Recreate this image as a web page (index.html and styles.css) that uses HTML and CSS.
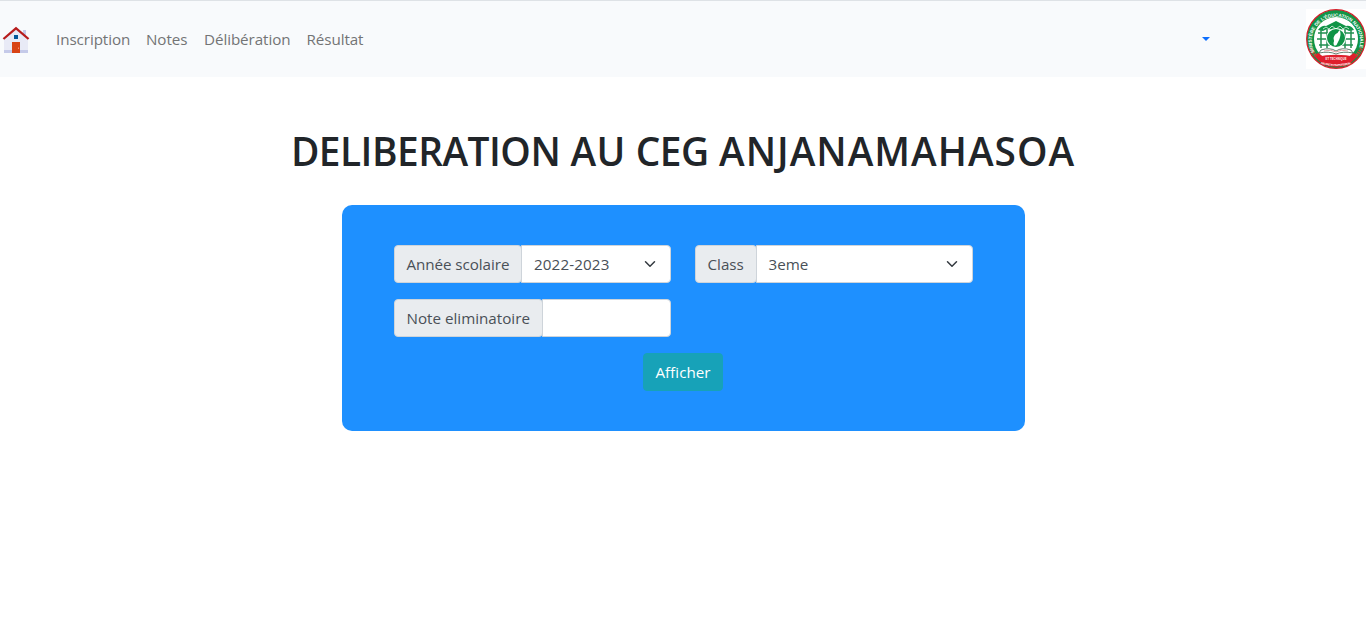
FILE: index.html
```html
<!DOCTYPE html>
<html lang="fr">
<head>
<meta charset="utf-8">
<title>Délibération</title>
<link rel="stylesheet" href="styles.css">
</head>
<body>
<header class="navbar">
  <a class="home" href="#" aria-label="Accueil">
    <svg width="32" height="32" viewBox="0 0 32 32">
      <path fill="#c5cae9" d="M23 6h3v9h-3z"/>
      <path fill="#e8eaf6" d="M28 27H4V14L16 5l12 9z"/>
      <path fill="#c5cae9" d="M4 26h24v3H4z"/>
      <path fill="#b71c1c" d="M16 2.8 2.7 14.2l1.5 1.6L16 5.8l11.8 10 1.5-1.6z"/>
      <path fill="#d84315" d="M12 18h8v11h-8z"/>
      <path fill="#01579b" d="M14 11h4v4h-4z"/>
      <path fill="#ff8a65" d="M18 23.5h1v1.5h-1z"/>
    </svg>
  </a>
  <nav class="links">
    <a class="link link-inscription" href="#">Inscription</a>
    <a class="link link-notes" href="#">Notes</a>
    <a class="link link-deliberation" href="#">Délibération</a>
    <a class="link" href="#">Résultat</a>
  </nav>
  <button class="caret" aria-label="Menu"></button>
  <svg class="seal" width="60" height="60" viewBox="0 0 60 60">
    <defs>
      <path id="arc-top" d="M8.5 43A24.2 24.2 0 1 1 51.5 43"/>
      <path id="arc-bottom" d="M15 54.8Q30 59 45 54.8"/>
    </defs>
    <path fill="#fff" d="M0 0h60v60H0z"/>
    <circle cx="30" cy="30" r="29.3" fill="#109447"/>
    <path fill="#df1f2c" d="M8 47 12 44Q20 49 30 49t18-5l4 3A29.3 29.3 0 0 1 8 47z"/>
    <circle cx="30" cy="30" r="22" fill="#fff"/>
    <path fill="#df1f2c" d="M10 48Q30 43.5 50 48L44 55Q30 61 16 55z"/>
    <circle cx="30" cy="30" r="29.3" fill="none" stroke="#d5202b" stroke-width="1.3"/>
    <path fill="none" stroke="#c64a35" stroke-width="3" stroke-dasharray="1.5 .7" d="M4.5 39.500 10 47M55.500 39.500 50 47"/>
    <path fill="#109447" d="M12 21q4-5 8-4l10-5 10 5q5-1 8 4l-5 1-4-2-9 1-9-1-4 2z"/>
    <path fill="none" stroke="#fff" stroke-width=".7" d="m17 20 3-2 3 2 3-3 4 3 4-3 3 3 3-2 3 2"/>
    <path fill="none" stroke="#218f50" stroke-width="1.5" d="M12 24h36M11 30h38M13 36h34M15 20v19M21 20v19M39 20v19M45 20v19"/>
    <circle cx="30" cy="29" r="10" fill="#fff"/>
    <circle cx="30" cy="29" r="9" fill="#109447"/>
    <path fill="#fff" d="M33.500 21q2 3 0 9l-3 6q-3 2-3-2 1-2 0-5 1-4 4-5z"/>
    <path fill="#fff" stroke="#3d5f4b" stroke-width=".8" d="M15 41q9-3 15 1 6-4 15-1l2 3q-10-2-17 1-7-3-17-1z"/>
    <path fill="none" stroke="#d97574" stroke-width=".7" d="M18 42q7-2 12 1 5-3 12-1"/>
    <text class="seal-ring"><textPath href="#arc-top" textLength="94">MINISTÈRE DE L’ÉDUCATION NATIONALE</textPath></text>
    <text class="seal-small" x="30" y="50.500" text-anchor="middle" textLength="21">ET TECHNIQUE</text>
    <text class="seal-small"><textPath href="#arc-bottom" textLength="30">DE L’ENS TECHN PROFESSION</textPath></text>
  </svg>
</header>
<main>
  <h1 class="title"><span class="title-tight">DELIBERATION</span> AU <span class="title-tight">CEG</span> <span class="title-wide">ANJANAMAHASOA</span></h1>
  <form class="panel">
    <div class="fields">
      <div class="group">
        <label class="tag tag-year">Année scolaire</label>
        <div class="control select select-year"><span>2022-2023</span>
          <svg class="chevron" viewBox="0 0 16 16"><path d="m2 5 6 6 6-6"/></svg>
        </div>
      </div>
      <div class="group">
        <label class="tag tag-class">Class</label>
        <div class="control select"><span>3eme</span>
          <svg class="chevron" viewBox="0 0 16 16"><path d="m2 5 6 6 6-6"/></svg>
        </div>
      </div>
      <div class="group">
        <label class="tag tag-note" for="note">Note eliminatoire</label>
        <input class="control" id="note" type="text">
      </div>
    </div>
    <button class="submit" type="button">Afficher</button>
  </form>
</main>
</body>
</html>
```
FILE: styles.css
```css
* { box-sizing: border-box; }
body {
  margin: 0;
  background: #fff;
  color: #212529;
  font: 400 15.2px/24px "Open Sans", "Noto Sans", sans-serif;
}
.navbar {
  display: flex;
  align-items: center;
  height: 77px;
  border-top: 1px solid #dee2e6;
  background: #f8fafc;
}
.home { display: flex; width: 32px; margin-right: 16px; padding-top: 2px; }
.links { display: flex; }
.link {
  padding: 8px;
  color: #737475;
  letter-spacing: -0.08px;
  text-decoration: none;
  white-space: nowrap;
}
.link-inscription { width: 90px; }
.link-notes { width: 58px; }
.link-deliberation { width: 102.5px; }
.caret {
  width: 0;
  height: 0;
  margin-left: auto;
  margin-right: 96px;
  padding: 0;
  border: 4.8px solid transparent;
  border-top-color: #0d6efd;
  border-bottom: 0;
  background: none;
}
.seal { flex: none; }
.seal-ring { font: 700 4.7px "Liberation Sans", sans-serif; fill: #fff; }
.seal-small { font: 700 2.6px "Liberation Sans", sans-serif; fill: #fff; }
.title {
  margin: 50px 0 30px;
  font-size: 38.8px;
  font-weight: 600;
  line-height: 48px;
  letter-spacing: 0.22px;
  text-align: center;
  white-space: nowrap;
}
.title-tight { letter-spacing: -0.5px; }
.title-wide { letter-spacing: 1px; }
.panel {
  width: 683px;
  height: 226px;
  margin: 0 auto;
  padding: 40px 52px;
  border-radius: 10px;
  background: #1e90ff;
  text-align: center;
}
.fields {
  display: grid;
  grid-template-columns: 277px 278px;
  gap: 16px 24px;
  margin-bottom: 16px;
}
.group { display: flex; height: 38px; text-align: left; }
.tag {
  flex: none;
  padding: 6px 12px;
  border: 1px solid #ced4da;
  border-radius: 4px;
  background: #e9ecef;
  color: #495057;
  white-space: nowrap;
}
.tag-year { width: 128px; letter-spacing: -0.06px; }
.tag-class { width: 62px; }
.tag-note { width: 149px; }
.control {
  flex: 1;
  min-width: 0;
  margin-left: -1px;
  border: 1px solid #ced4da;
  border-radius: 0 4px 4px 0;
  background: #fff;
  color: #495057;
}
.select {
  display: flex;
  align-items: center;
  justify-content: space-between;
  padding: 0 12px;
}
.select-year { padding-left: 12.5px; letter-spacing: 0.12px; }
.chevron {
  width: 16px;
  height: 12px;
  fill: none;
  stroke: #343a40;
  stroke-width: 2;
  stroke-linecap: round;
  stroke-linejoin: round;
}
.submit {
  width: 80px;
  height: 38px;
  padding: 0;
  border: 1px solid #17a2b8;
  border-radius: 4px;
  background: #17a2b8;
  color: #fff;
  font: inherit;
}
```
